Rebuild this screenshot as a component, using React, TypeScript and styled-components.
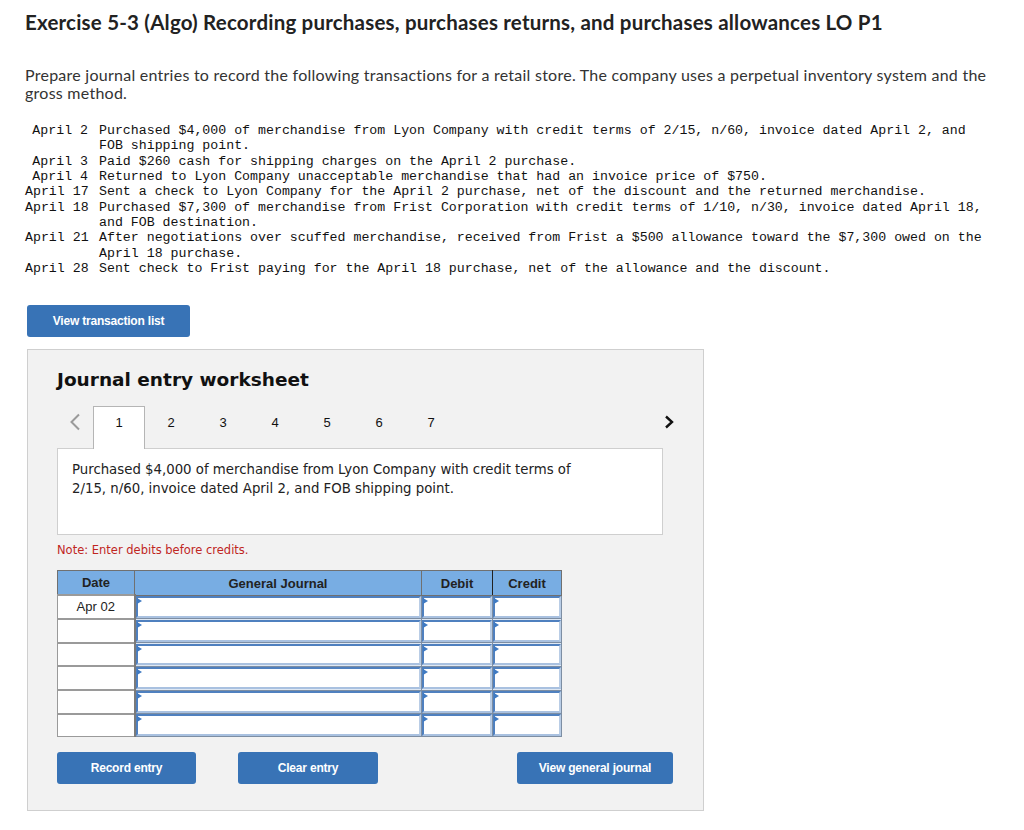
import React from 'react'
import styled, { createGlobalStyle } from 'styled-components'

const GlobalStyle = createGlobalStyle`
  body {
    margin: 0;
    background: #ffffff;
    font-family: 'Liberation Sans', Arial, sans-serif;
  }
`

const Page = styled.div`
  width: 1024px;
  min-height: 830px;
  padding: 11px 25px 0 25px;
  box-sizing: border-box;
`

const Title = styled.h1`
  margin: 0;
  font-family: Lato, 'Liberation Sans', sans-serif;
  font-weight: 700;
  font-size: 20.5px;
  letter-spacing: 0.2px;
  line-height: 22px;
  color: #222;
`

const Intro = styled.p`
  margin: 33px 0 0 0;
  font-family: Lato, 'Liberation Sans', sans-serif;
  font-size: 16px;
  letter-spacing: 0.25px;
  line-height: 18px;
  color: #333;
  width: 975px;
`

const MonoList = styled.div`
  margin-top: 21px;
  display: grid;
  grid-template-columns: 63px 890px;
  column-gap: 11px;
  font-family: 'Liberation Mono', 'Courier New', monospace;
  font-size: 13.25px;
  line-height: 15.33px;
  color: #111;
`

const MonoDate = styled.div`
  text-align: right;
  white-space: nowrap;
`

const MonoText = styled.div``

const BlueButton = styled.button<{ $w: number }>`
  width: ${p => p.$w}px;
  height: 32px;
  border: none;
  border-radius: 3px;
  background: #3873b6;
  color: #fff;
  font-family: 'Liberation Sans', Arial, sans-serif;
  font-weight: 700;
  font-size: 12px;
  letter-spacing: -0.2px;
  padding: 0;
  cursor: pointer;
`

const TopButton = styled(BlueButton)`
  margin: 29px 0 0 2px;
  display: block;
`

const Panel = styled.div`
  margin: 12px 0 0 2px;
  width: 677px;
  height: 462px;
  box-sizing: border-box;
  background: #f2f2f2;
  border: 1px solid #cfcfcf;
  padding: 19px 0 0 29px;
`

const PanelTitle = styled.h2`
  margin: 0;
  font-family: 'DejaVu Sans', Verdana, sans-serif;
  font-weight: 700;
  font-size: 18.5px;
  line-height: 22px;
  color: #111;
`

const TabRow = styled.div`
  margin-top: 15px;
  width: 622px;
  height: 42px;
  display: flex;
  align-items: stretch;
  position: relative;
  z-index: 1;
`

const Arrow = styled.div<{ $w: number }>`
  width: ${p => p.$w}px;
  display: flex;
  align-items: center;
  justify-content: center;
  padding-bottom: 10px;
  box-sizing: border-box;
`

const Tab = styled.div<{ $active?: boolean }>`
  width: 52px;
  box-sizing: border-box;
  display: flex;
  align-items: flex-start;
  justify-content: center;
  padding-top: 8px;
  font-family: 'Liberation Sans', Arial, sans-serif;
  font-size: 13px;
  line-height: 16px;
  color: #111;
  background: ${p => (p.$active ? '#fff' : 'transparent')};
  border: 1px solid ${p => (p.$active ? '#b5b5b5' : 'transparent')};
  border-bottom: none;
  margin-bottom: ${p => (p.$active ? '-1px' : '0')};
`

const Spacer = styled.div`
  flex: 1;
`

const EntryBox = styled.div`
  width: 606px;
  height: 87px;
  box-sizing: border-box;
  background: #fff;
  border: 1px solid #cfcfcf;
  padding: 11px 14px 0 14px;
`

const EntryText = styled.p`
  margin: 0;
  width: 530px;
  font-family: 'DejaVu Sans', Verdana, sans-serif;
  font-size: 13.3px;
  line-height: 19px;
  color: #222;
`

const Note = styled.div`
  margin-top: 8px;
  font-family: 'DejaVu Sans', Verdana, sans-serif;
  font-size: 11.5px;
  line-height: 14px;
  color: #c0261f;
`

const Journal = styled.table`
  margin-top: 13px;
  border-collapse: collapse;
  width: 500px;
  table-layout: fixed;
`

const HeadCell = styled.th<{ $w: number; $dark?: boolean }>`
  width: ${p => p.$w}px;
  height: 23px;
  padding: 0;
  background: #78ade3;
  border: 1px solid #707070;
  border-right-color: ${p => (p.$dark ? '#222' : '#707070')};
  font-family: 'Liberation Sans', Arial, sans-serif;
  font-weight: 700;
  font-size: 13px;
  color: #222;
  text-align: center;
`

const DateCell = styled.td`
  height: 21.7px;
  padding: 0;
  background: #fff;
  border: 1px solid #9a9a9a;
  border-top-width: 2px;
  border-right: 2px solid #7a7a7a;
  font-family: 'Liberation Sans', Arial, sans-serif;
  font-size: 13px;
  line-height: 16px;
  color: #222;
  text-align: center;
  vertical-align: middle;
`

const InputCell = styled.td`
  padding: 0;
  height: 21.7px;
  border: 1px solid #7d8ea3;
  background: #dfe8f3;
`

const InputBox = styled.div`
  position: relative;
  height: 21.7px;
  box-sizing: border-box;
  background: #fff;
  border: 2px solid #4f80bf;
  border-right-color: #b9cde6;
  border-bottom-color: #a9c1e0;
  &::before {
    content: '';
    position: absolute;
    left: -1px;
    top: 0;
    border-left: 5px solid #3f7ac2;
    border-top: 3px solid transparent;
    border-bottom: 3px solid transparent;
  }
`

const ButtonRow = styled.div`
  margin-top: 15px;
  width: 616px;
  display: flex;
`

const ClearButton = styled(BlueButton)`
  margin-left: 42px;
`

const PrevIcon = () => (
  <svg width="12" height="18" viewBox="0 0 12 18">
    <polyline points="10,1.5 2.5,9 10,16.5" fill="none" stroke="#9a9a9a" strokeWidth="2" />
  </svg>
)

const NextIcon = () => (
  <svg width="10" height="14" viewBox="0 0 10 14">
    <polyline points="2,1.5 8,7 2,12.5" fill="none" stroke="#111" strokeWidth="2.4" />
  </svg>
)

const transactions: [string, string][] = [
  ['April 2', 'Purchased $4,000 of merchandise from Lyon Company with credit terms of 2/15, n/60, invoice dated April 2, and FOB shipping point.'],
  ['April 3', 'Paid $260 cash for shipping charges on the April 2 purchase.'],
  ['April 4', 'Returned to Lyon Company unacceptable merchandise that had an invoice price of $750.'],
  ['April 17', 'Sent a check to Lyon Company for the April 2 purchase, net of the discount and the returned merchandise.'],
  ['April 18', 'Purchased $7,300 of merchandise from Frist Corporation with credit terms of 1/10, n/30, invoice dated April 18, and FOB destination.'],
  ['April 21', 'After negotiations over scuffed merchandise, received from Frist a $500 allowance toward the $7,300 owed on the April 18 purchase.'],
  ['April 28', 'Sent check to Frist paying for the April 18 purchase, net of the allowance and the discount.'],
]

const rows = ['Apr 02', '', '', '', '', '']

export default function App() {
  return (
    <>
      <GlobalStyle />
      <Page>
        <Title>Exercise 5-3 (Algo) Recording purchases, purchases returns, and purchases allowances LO P1</Title>
        <Intro>
          Prepare journal entries to record the following transactions for a retail store. The company uses a perpetual
          inventory system and the gross method.
        </Intro>
        <MonoList>
          {transactions.map(([d, t]) => (
            <React.Fragment key={d}>
              <MonoDate>{d}</MonoDate>
              <MonoText>{t}</MonoText>
            </React.Fragment>
          ))}
        </MonoList>

        <TopButton $w={163}>View transaction list</TopButton>

        <Panel>
          <PanelTitle>Journal entry worksheet</PanelTitle>
          <TabRow>
            <Arrow $w={36}>
              <PrevIcon />
            </Arrow>
            {[1, 2, 3, 4, 5, 6, 7].map(n => (
              <Tab key={n} $active={n === 1}>
                {n}
              </Tab>
            ))}
            <Spacer />
            <Arrow $w={20}>
              <NextIcon />
            </Arrow>
          </TabRow>
          <EntryBox>
            <EntryText>
              Purchased $4,000 of merchandise from Lyon Company with credit terms of 2/15, n/60, invoice dated April 2,
              and FOB shipping point.
            </EntryText>
          </EntryBox>
          <Note>Note: Enter debits before credits.</Note>

          <Journal>
            <thead>
              <tr>
                <HeadCell $w={76}>Date</HeadCell>
                <HeadCell $w={286}>General Journal</HeadCell>
                <HeadCell $w={70} $dark>Debit</HeadCell>
                <HeadCell $w={68}>Credit</HeadCell>
              </tr>
            </thead>
            <tbody>
              {rows.map((d, i) => (
                <tr key={i}>
                  <DateCell>{d}</DateCell>
                  <InputCell>
                    <InputBox />
                  </InputCell>
                  <InputCell>
                    <InputBox />
                  </InputCell>
                  <InputCell>
                    <InputBox />
                  </InputCell>
                </tr>
              ))}
            </tbody>
          </Journal>

          <ButtonRow>
            <BlueButton $w={139}>Record entry</BlueButton>
            <ClearButton $w={140}>Clear entry</ClearButton>
            <Spacer />
            <BlueButton $w={156}>View general journal</BlueButton>
          </ButtonRow>
        </Panel>
      </Page>
    </>
  )
}
